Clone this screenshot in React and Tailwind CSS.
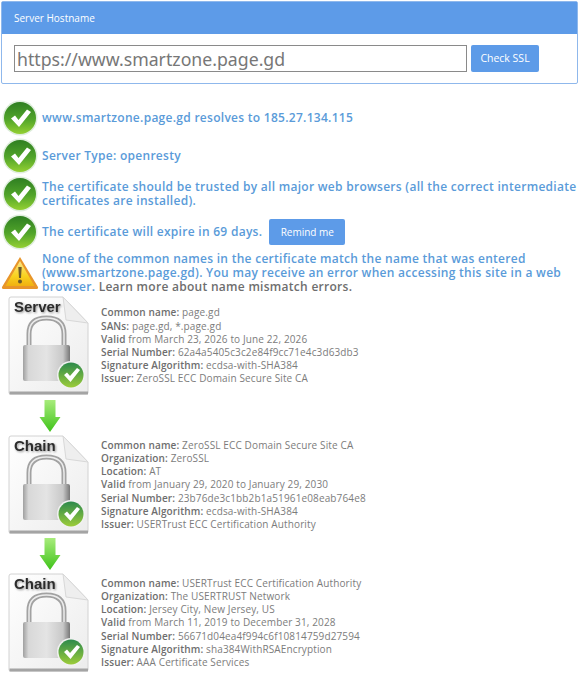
import { useId } from "react";

function CheckIcon() {
  const id = useId();
  return (
    <svg viewBox="0 0 36 36" className="w-[36px] h-[36px] shrink-0">
      <defs>
        <linearGradient id={id} x1="0" y1="0" x2="0" y2="1">
          <stop offset="0" stopColor="#2f7f22" />
          <stop offset="0.55" stopColor="#52a52a" />
          <stop offset="1" stopColor="#93d032" />
        </linearGradient>
      </defs>
      <circle cx="18" cy="18" r="17.5" fill="#dfeedd" />
      <circle cx="18" cy="18" r="16" fill={`url(#${id})`} />
      <path d="M9 18.5 L13 15.5 L16.5 20 L25 9.5 L29 12 L17 27 Z" fill="#fff" />
    </svg>
  );
}

function WarningIcon() {
  const id = useId();
  return (
    <svg viewBox="0 0 38 36" className="w-[38px] h-[36px] shrink-0">
      <defs>
        <linearGradient id={id} x1="0" y1="0" x2="0" y2="1">
          <stop offset="0" stopColor="#fbe58a" />
          <stop offset="0.6" stopColor="#f8d21e" />
          <stop offset="1" stopColor="#f0b010" />
        </linearGradient>
      </defs>
      <path d="M19 2 L37 32 Q37.5 34 35 34 L3 34 Q0.5 34 1 32 Z" fill="#e8952a" />
      <path d="M19 6 L33.5 31 L4.5 31 Z" fill={`url(#${id})`} />
      <path d="M17.3 12 L20.7 12 L20 23 L18 23 Z" fill="#6b5a2a" />
      <circle cx="19" cy="26.5" r="2" fill="#6b5a2a" />
    </svg>
  );
}

function CertIcon({ label }) {
  const id = useId();
  const shackle = "M21 52 L21 38 Q21 22 38.5 22 Q56 22 56 38 L56 52";
  return (
    <svg viewBox="0 0 82 100" className="w-[82px] h-[100px] shrink-0">
      <defs>
        <linearGradient id={`${id}p`} x1="0" y1="0" x2="1" y2="1">
          <stop offset="0" stopColor="#ffffff" />
          <stop offset="1" stopColor="#ececec" />
        </linearGradient>
        <linearGradient id={`${id}b`} x1="0" y1="0" x2="1" y2="0">
          <stop offset="0" stopColor="#a0a0a0" />
          <stop offset="0.12" stopColor="#d8d8d8" />
          <stop offset="0.5" stopColor="#e4e4e4" />
          <stop offset="0.85" stopColor="#c8c8c8" />
          <stop offset="1" stopColor="#777" />
        </linearGradient>
        <linearGradient id={`${id}g`} x1="0" y1="0" x2="0" y2="1">
          <stop offset="0" stopColor="#2d8a4c" />
          <stop offset="1" stopColor="#9ccc3a" />
        </linearGradient>
      </defs>
      <path d="M3 1 L55 1 L80 27 L80 97 Q80 98 78 98 L3 98 Q1 98 1 97 L1 3 Q1 1 3 1 Z" fill={`url(#${id}p)`} stroke="#d2d2d2" />
      <path d="M1.500 95.500 L80 95.500 L80 98.500 L1.500 98.500 Z" fill="#a4a4a4" />
      <path d="M55 1 L58 24 L80 27 Z" fill="#eee" stroke="#d8d8d8" />
      <text x="6" y="16" fontFamily="Liberation Sans, sans-serif" fontWeight="700" fontSize="15" fill="#2b2b2b" className="drop-shadow-[1px_1px_1px_rgba(0,0,0,0.4)]">{label}</text>
      <path d={shackle} fill="none" stroke="#a2a2a2" strokeWidth="5" />
      <path d={shackle} fill="none" stroke="#ececec" strokeWidth="1.500" />
      <rect x="15" y="49" width="47" height="36" rx="2" fill={`url(#${id}b)`} />
      <circle cx="63" cy="79" r="14" fill="#f1f1f1" />
      <circle cx="63" cy="79" r="12.500" fill={`url(#${id}g)`} />
      <path d="M56 79 L59 76.500 L62 80 L69 72 L72 74 L62.500 86 Z" fill="#fff" />
    </svg>
  );
}

function DownArrow() {
  const id = useId();
  return (
    <svg viewBox="0 0 22 34" className="w-[22px] h-[34px]">
      <defs>
        <linearGradient id={id} x1="0" y1="0" x2="0" y2="1">
          <stop offset="0" stopColor="#a8ec7c" />
          <stop offset="1" stopColor="#3fc31a" />
        </linearGradient>
      </defs>
      <path d="M5.500 1 L16.500 1 L16.500 18 L21.500 18 L11 33 L0.500 18 L5.500 18 Z" fill={`url(#${id})`} />
    </svg>
  );
}

function Status({ children, icon }) {
  return (
    <div className="flex items-center gap-[4px] pl-[2px]">
      {icon || <CheckIcon />}
      <div className="text-[12px] leading-[14px] font-semibold text-[#5a9bd9] tracking-[0.28px]">{children}</div>
    </div>
  );
}

function CertBlock({ label, rows }) {
  return (
    <div className="flex items-center gap-[11px] pl-[8px]">
      <CertIcon label={label} />
      <div className="text-[10px] leading-[13.2px] tracking-[0.13px] text-[#7c7c7c]">
        {rows.map((row) => (
          <div key={row[0]}>
            <span className="font-semibold text-[#6e6e6e]">{row[0]}</span> {row[1]}
          </div>
        ))}
      </div>
    </div>
  );
}

function Arrow() {
  return (
    <div className="flex pl-[39px] h-[38px] items-center">
      <DownArrow />
    </div>
  );
}

export default function App() {
  return (
    <div className="w-[585px] h-[677px] overflow-hidden bg-white font-['Open_Sans',sans-serif]">
      <div className="mx-[1px] mt-[1px] w-[577px] border border-[#8fb8ec] rounded-[2px]">
        <div className="h-[32px] bg-[#5d9be8] flex items-center px-[12px] text-[10px] text-white">Server Hostname</div>
        <div className="h-[49px] flex items-center gap-[4px] pl-[12px]">
          <input
            readOnly
            value="https://www.smartzone.page.gd"
            className="w-[453px] h-[27px] border border-[#8a8a8a] px-[2px] text-[17.7px] text-[#777] font-['Noto_Sans',sans-serif] outline-none"
          />
          <button className="w-[68px] h-[27px] bg-[#5d9be8] rounded-[2px] text-white text-[10.5px]">Check SSL</button>
        </div>
      </div>

      <div className="mt-[16px] flex flex-col gap-[2px]">
        <Status>www.smartzone.page.gd resolves to 185.27.134.115</Status>
        <Status>Server Type: openresty</Status>
        <Status>
          The certificate should be trusted by all major web browsers (all the correct intermediate certificates are installed).
        </Status>
        <Status>
          <div className="flex items-center gap-[7px]">
            The certificate will expire in 69 days.
            <button className="w-[76px] h-[26px] bg-[#5d9be8] rounded-[2px] text-white text-[10px] font-normal tracking-normal">Remind me</button>
          </div>
        </Status>
      </div>

      <div className="flex items-center gap-[3px] mt-[2px] pl-[1px]">
        <WarningIcon />
        <div className="text-[12px] leading-[14px] font-semibold text-[#5a9bd9] tracking-[0.28px]">
          None of the common names in the certificate match the name that was entered (www.smartzone.page.gd). You may receive an error when accessing this site in a web browser. <span className="text-[#6e6e6e]">Learn more about name mismatch errors.</span>
        </div>
      </div>

      <div className="mt-[2px]">
        <CertBlock
          label="Server"
          rows={[
            ["Common name:", "page.gd"],
            ["SANs:", "page.gd, *.page.gd"],
            ["Valid", "from March 23, 2026 to June 22, 2026"],
            ["Serial Number:", "62a4a5405c3c2e84f9cc71e4c3d63db3"],
            ["Signature Algorithm:", "ecdsa-with-SHA384"],
            ["Issuer:", "ZeroSSL ECC Domain Secure Site CA"],
          ]}
        />
        <div className="h-[1px]" />
        <Arrow />
        <CertBlock
          label="Chain"
          rows={[
            ["Common name:", "ZeroSSL ECC Domain Secure Site CA"],
            ["Organization:", "ZeroSSL"],
            ["Location:", "AT"],
            ["Valid", "from January 29, 2020 to January 29, 2030"],
            ["Serial Number:", "23b76de3c1bb2b1a51961e08eab764e8"],
            ["Signature Algorithm:", "ecdsa-with-SHA384"],
            ["Issuer:", "USERTrust ECC Certification Authority"],
          ]}
        />
        <Arrow />
        <CertBlock
          label="Chain"
          rows={[
            ["Common name:", "USERTrust ECC Certification Authority"],
            ["Organization:", "The USERTRUST Network"],
            ["Location:", "Jersey City, New Jersey, US"],
            ["Valid", "from March 11, 2019 to December 31, 2028"],
            ["Serial Number:", "56671d04ea4f994c6f10814759d27594"],
            ["Signature Algorithm:", "sha384WithRSAEncryption"],
            ["Issuer:", "AAA Certificate Services"],
          ]}
        />
      </div>
    </div>
  );
}
